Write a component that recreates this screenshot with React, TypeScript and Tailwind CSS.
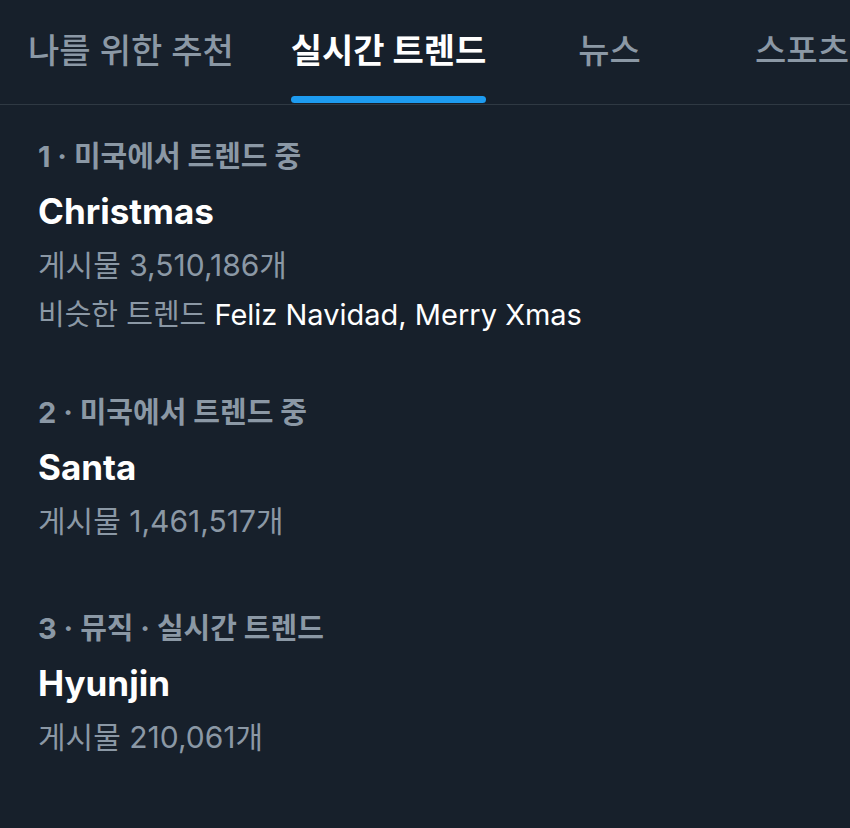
import React from "react";

const font = { fontFamily: 'Inter, "Noto Sans CJK KR", sans-serif' };

function Tab({ label, active, cellClass }: { label: string; active?: boolean; cellClass: string }) {
  return (
    <div className={`${cellClass} shrink-0 flex justify-center h-full`}>
      <div className="relative h-full flex items-start pt-[28px]">
        <span
          className={`text-[34px] leading-[46px] whitespace-nowrap ${
            active ? "text-white font-bold" : "text-[#8b98a5] font-medium"
          }`}
        >
          {label}
        </span>
        {active && (
          <div className="absolute left-0 right-0 bottom-[1px] h-[7px] rounded-full bg-[#1d9bf0]" />
        )}
      </div>
    </div>
  );
}

function Trend({
  label,
  title,
  count,
  similar,
  className,
}: {
  label: string;
  title: string;
  count: string;
  similar?: string;
  className?: string;
}) {
  return (
    <div className={`pl-[38px] ${className ?? ""}`}>
      <div className="h-[54px] flex items-center text-[29px] font-bold text-[#8b98a5]">{label}</div>
      <div className="h-[54px] flex items-center text-[35px] font-bold text-white">{title}</div>
      <div className="h-[54px] flex items-center text-[30px] text-[#8b98a5]">{count}</div>
      {similar && (
        <div className="h-[46px] flex items-center text-[29px] text-[#8b98a5] whitespace-nowrap">
          비슷한 트렌드&nbsp;<span className="text-white">{similar}</span>
        </div>
      )}
    </div>
  );
}

export default function App() {
  return (
    <div className="w-[850px] h-[828px] bg-[#17202b] overflow-hidden" style={font}>
      <div className="h-[105px] flex border-b border-[#2f3943] overflow-hidden">
        <Tab label="나를 위한 추천" cellClass="w-[262px]" />
        <Tab label="실시간 트렌드" active cellClass="w-[253px]" />
        <Tab label="뉴스" cellClass="w-[189px]" />
        <Tab label="스포츠" cellClass="w-[196px]" />
      </div>
      <div className="pt-[25px]">
        <Trend
          label="1 · 미국에서 트렌드 중"
          title="Christmas"
          count="게시물 3,510,186개"
          similar="Feliz Navidad, Merry Xmas"
        />
        <Trend className="mt-[48px]" label="2 · 미국에서 트렌드 중" title="Santa" count="게시물 1,461,517개" />
        <Trend className="mt-[54px]" label="3 · 뮤직 · 실시간 트렌드" title="Hyunjin" count="게시물 210,061개" />
      </div>
    </div>
  );
}
